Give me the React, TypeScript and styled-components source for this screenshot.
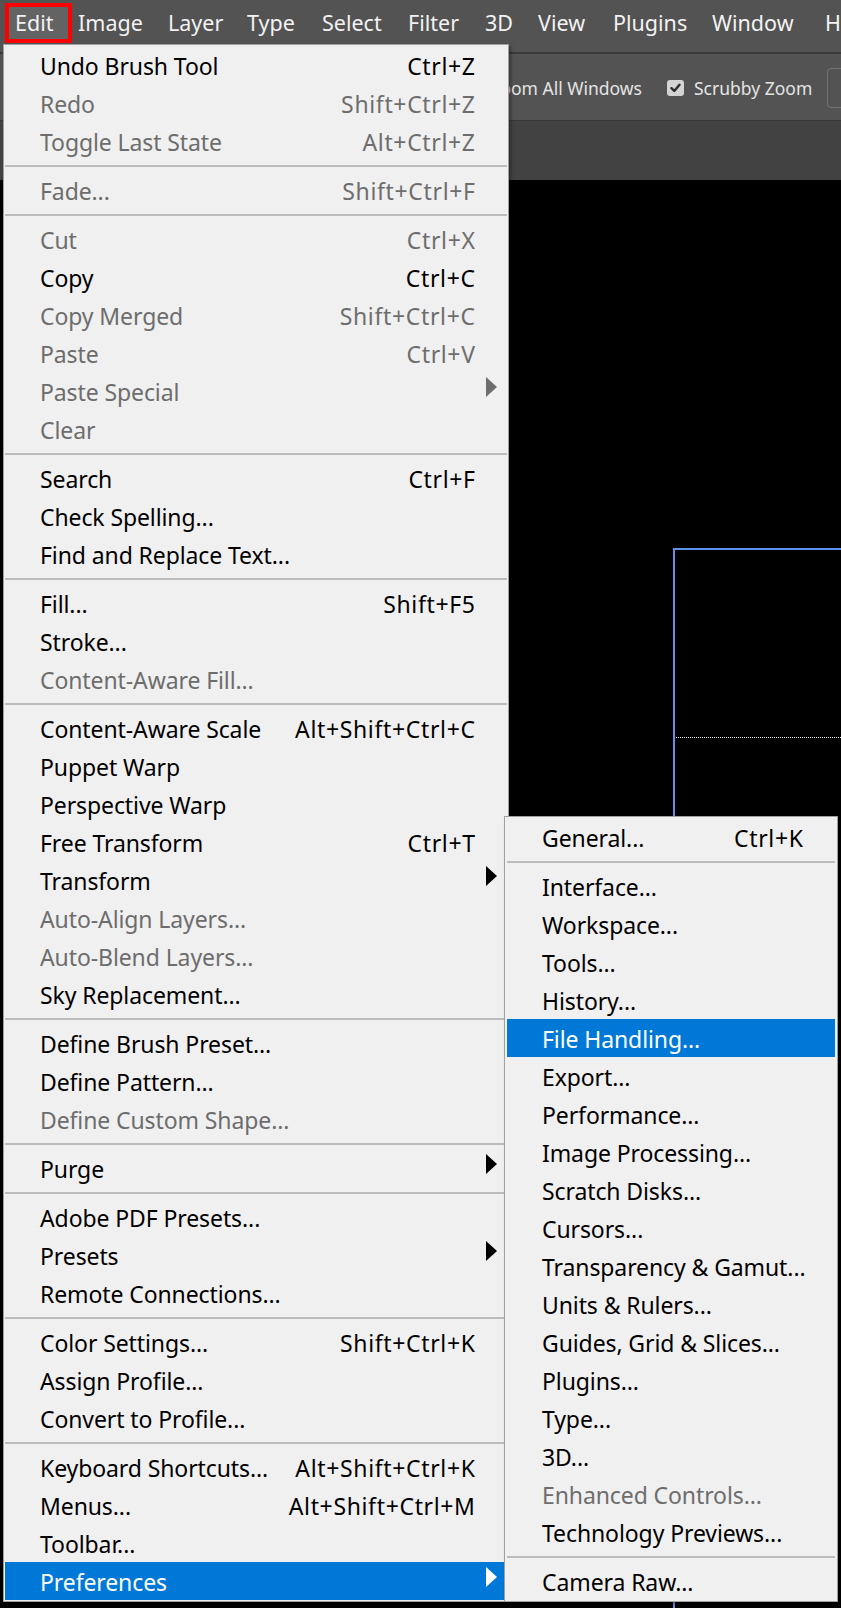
import React from "react";
import styled, { createGlobalStyle } from "styled-components";

const GlobalStyle = createGlobalStyle`
  html, body {
    margin: 0;
    padding: 0;
    background: #000;
  }
  body {
    font-family: "Noto Sans", "Open Sans", "Noto Sans CJK KR", sans-serif;
  }
  * {
    box-sizing: border-box;
  }
`;

const Screen = styled.div`
    position: relative;
    width: 841px;
    height: 1608px;
    overflow: hidden;
    background: #000;
    display: flex;
    flex-direction: column;
`;

const MenuBar = styled.div`
    flex: none;
    height: 54px;
    display: flex;
    align-items: flex-start;
    padding-left: 5px;
    background: #535353;
    border-bottom: 2px solid #3a3a3a;
    overflow: hidden;
`;

const MenuBarItem = styled.div<{ $w?: number; $active?: boolean }>`
    flex: none;
    width: ${(p) => (p.$w ? `${p.$w}px` : "auto")};
    height: 40px;
    margin-top: 3px;
    margin-right: ${(p) => (p.$active ? 2 : 0)}px;
    padding-left: ${(p) => (p.$active ? 6 : 0)}px;
    border: 4px solid ${(p) => (p.$active ? "#ff0000" : "transparent")};
    background: ${(p) => (p.$active ? "#636363" : "transparent")};
    color: #f2f2f2;
    font-size: 21.5px;
    line-height: 31px;
    white-space: nowrap;
`;

const OptionsBar = styled.div`
    flex: none;
    height: 66px;
    display: flex;
    align-items: center;
    padding-top: 2px;
    background: #535353;
    color: #e4e4e4;
    font-size: 17.5px;
    white-space: nowrap;
    overflow: hidden;
`;

const OptionLead = styled.div`
    flex: none;
    width: 642px;
    display: flex;
    justify-content: flex-end;
`;

const CheckBox = styled.div`
    flex: none;
    width: 17px;
    height: 16px;
    margin-left: 25px;
    border-radius: 3px;
    background: #d4d4d4;
    display: flex;
    align-items: center;
    justify-content: center;
`;

const CheckLabel = styled.span`
    margin-left: 10px;
`;

const Field = styled.div`
    flex: none;
    width: 120px;
    height: 40px;
    margin-left: 15px;
    border: 1.5px solid #717171;
    border-radius: 4px;
`;

const TabStrip = styled.div`
    flex: none;
    height: 60px;
    background: #424242;
    border-top: 1px solid #393939;
`;

const Canvas = styled.div`
    flex: 1;
    min-height: 0;
    overflow: hidden;
    background: #000;
    padding: 368px 0 0 673px;
`;

const Artboard = styled.div`
    width: 400px;
    height: 1200px;
    border-left: 2px solid #5a93e8;
    border-top: 2px solid #5a93e8;
`;

const Guide = styled.div`
    height: 188px;
    margin-left: 1px;
    border-bottom: 1px dotted #e6e6e6;
`;

const Dropdown = styled.div<{ $left: number; $top: number; $width: number; $pad: number }>`
    position: absolute;
    left: ${(p) => p.$left}px;
    top: ${(p) => p.$top}px;
    width: ${(p) => p.$width}px;
    display: flex;
    flex-direction: column;
    padding: 1px ${(p) => p.$pad}px;
    background: #f0f0f0;
    border: 1px solid #a0a0a0;
    box-shadow: 2px 2px 3px rgba(0, 0, 0, 0.35);
`;

const Row = styled.div<{ $active?: boolean; $disabled?: boolean }>`
    flex: none;
    display: flex;
    height: 38px;
    padding: 3px 0 0 35px;
    font-size: 23px;
    line-height: 35px;
    white-space: nowrap;
    background: ${(p) => (p.$active ? "#0078d7" : "transparent")};
    color: ${(p) => (p.$active ? "#ffffff" : p.$disabled ? "#6d6d6d" : "#000000")};
`;

const Label = styled.span`
    flex: 1;
    letter-spacing: -0.1px;
`;

const Shortcut = styled.span`
    flex: none;
    letter-spacing: 0.65px;
    margin-right: -0.65px;
`;

const ArrowSlot = styled.span`
    flex: none;
    width: 32px;
    padding: 2px 0 0 11px;
`;

const Arrow = styled.span`
    display: block;
    width: 0;
    height: 0;
    border-left: 11px solid currentColor;
    border-top: 10px solid transparent;
    border-bottom: 10px solid transparent;
`;

const Separator = styled.div`
    flex: none;
    height: 2px;
    margin: 5px 0 4px;
    background: #bcbcbc;
`;

type Item =
    | "-"
    | {
          label: string;
          key?: string;
          off?: boolean;
          sub?: boolean;
          on?: boolean;
      };

const editItems: Item[] = [
    { label: "Undo Brush Tool", key: "Ctrl+Z" },
    { label: "Redo", key: "Shift+Ctrl+Z", off: true },
    { label: "Toggle Last State", key: "Alt+Ctrl+Z", off: true },
    "-",
    { label: "Fade...", key: "Shift+Ctrl+F", off: true },
    "-",
    { label: "Cut", key: "Ctrl+X", off: true },
    { label: "Copy", key: "Ctrl+C" },
    { label: "Copy Merged", key: "Shift+Ctrl+C", off: true },
    { label: "Paste", key: "Ctrl+V", off: true },
    { label: "Paste Special", off: true, sub: true },
    { label: "Clear", off: true },
    "-",
    { label: "Search", key: "Ctrl+F" },
    { label: "Check Spelling..." },
    { label: "Find and Replace Text..." },
    "-",
    { label: "Fill...", key: "Shift+F5" },
    { label: "Stroke..." },
    { label: "Content-Aware Fill...", off: true },
    "-",
    { label: "Content-Aware Scale", key: "Alt+Shift+Ctrl+C" },
    { label: "Puppet Warp" },
    { label: "Perspective Warp" },
    { label: "Free Transform", key: "Ctrl+T" },
    { label: "Transform", sub: true },
    { label: "Auto-Align Layers...", off: true },
    { label: "Auto-Blend Layers...", off: true },
    { label: "Sky Replacement..." },
    "-",
    { label: "Define Brush Preset..." },
    { label: "Define Pattern..." },
    { label: "Define Custom Shape...", off: true },
    "-",
    { label: "Purge", sub: true },
    "-",
    { label: "Adobe PDF Presets..." },
    { label: "Presets", sub: true },
    { label: "Remote Connections..." },
    "-",
    { label: "Color Settings...", key: "Shift+Ctrl+K" },
    { label: "Assign Profile..." },
    { label: "Convert to Profile..." },
    "-",
    { label: "Keyboard Shortcuts...", key: "Alt+Shift+Ctrl+K" },
    { label: "Menus...", key: "Alt+Shift+Ctrl+M" },
    { label: "Toolbar..." },
    { label: "Preferences", sub: true, on: true },
];

const prefItems: Item[] = [
    { label: "General...", key: "Ctrl+K" },
    "-",
    { label: "Interface..." },
    { label: "Workspace..." },
    { label: "Tools..." },
    { label: "History..." },
    { label: "File Handling...", on: true },
    { label: "Export..." },
    { label: "Performance..." },
    { label: "Image Processing..." },
    { label: "Scratch Disks..." },
    { label: "Cursors..." },
    { label: "Transparency & Gamut..." },
    { label: "Units & Rulers..." },
    { label: "Guides, Grid & Slices..." },
    { label: "Plugins..." },
    { label: "Type..." },
    { label: "3D..." },
    { label: "Enhanced Controls...", off: true },
    { label: "Technology Previews..." },
    "-",
    { label: "Camera Raw..." },
];

const menuBar: { label: string; w?: number; active?: boolean }[] = [
    { label: "Edit", w: 67, active: true },
    { label: "Image", w: 90 },
    { label: "Layer", w: 79 },
    { label: "Type", w: 75 },
    { label: "Select", w: 86 },
    { label: "Filter", w: 77 },
    { label: "3D", w: 53 },
    { label: "View", w: 75 },
    { label: "Plugins", w: 99 },
    { label: "Window", w: 113 },
    { label: "Help" },
];

const MenuList: React.FC<{ items: Item[] }> = ({ items }) => (
    <>
        {items.map((it, i) =>
            it === "-" ? (
                <Separator key={i} />
            ) : (
                <Row key={i} $active={it.on} $disabled={it.off}>
                    <Label>{it.label}</Label>
                    {it.key && <Shortcut>{it.key}</Shortcut>}
                    <ArrowSlot>{it.sub && <Arrow />}</ArrowSlot>
                </Row>
            )
        )}
    </>
);

export default function App() {
    return (
        <>
            <GlobalStyle />
            <Screen>
                <MenuBar>
                    {menuBar.map((m) => (
                        <MenuBarItem key={m.label} $w={m.w} $active={m.active}>
                            {m.label}
                        </MenuBarItem>
                    ))}
                </MenuBar>
                <OptionsBar>
                    <OptionLead>Zoom All Windows</OptionLead>
                    <CheckBox>
                        <svg width="11" height="10" viewBox="0 0 11 10">
                            <polyline
                                points="1.5,5.2 4.3,8 9.5,1.8"
                                fill="none"
                                stroke="#2b2b2b"
                                strokeWidth="2.4"
                                strokeLinecap="round"
                                strokeLinejoin="round"
                            />
                        </svg>
                    </CheckBox>
                    <CheckLabel>Scrubby Zoom</CheckLabel>
                    <Field />
                </OptionsBar>
                <TabStrip />
                <Canvas>
                    <Artboard>
                        <Guide />
                    </Artboard>
                </Canvas>

                <Dropdown $left={3} $top={44} $width={506} $pad={1}>
                    <MenuList items={editItems} />
                </Dropdown>
                <Dropdown $left={504} $top={816} $width={334} $pad={2}>
                    <MenuList items={prefItems} />
                </Dropdown>
            </Screen>
        </>
    );
}
